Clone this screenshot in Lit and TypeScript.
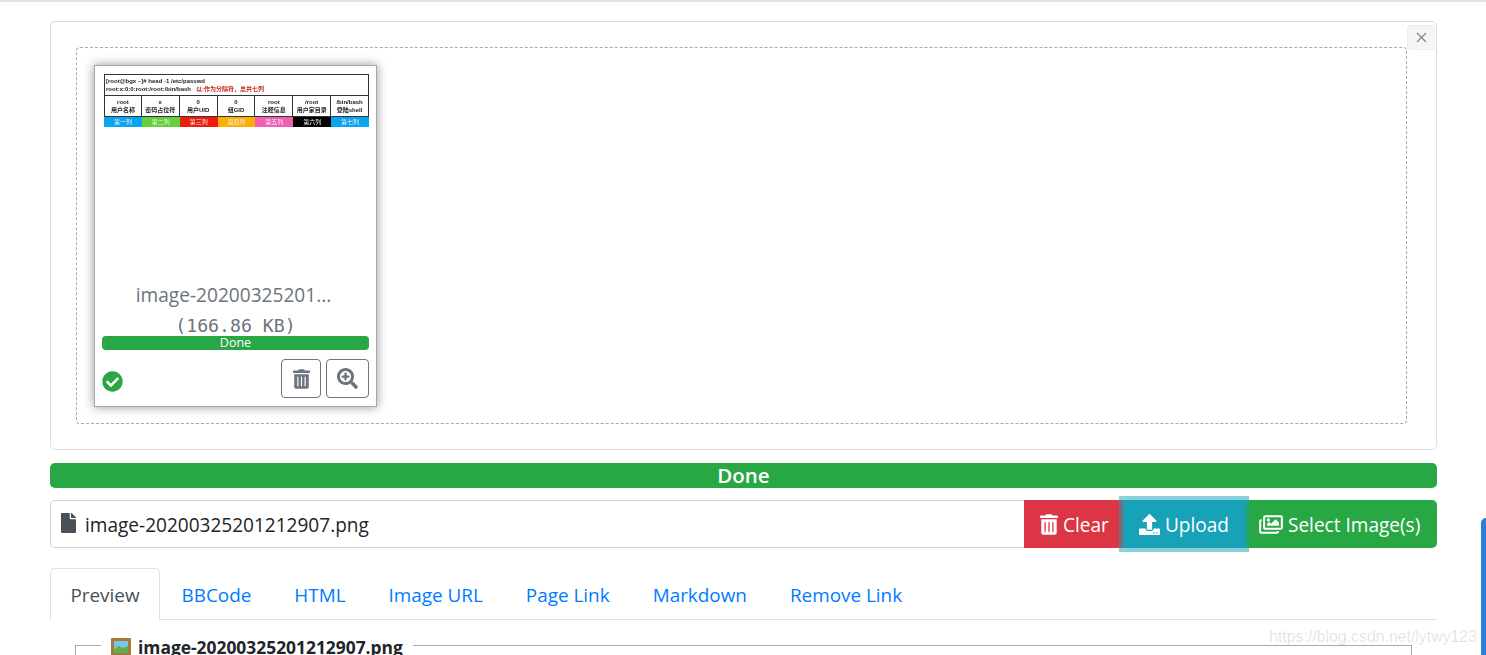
import { LitElement, html, css, svg } from "lit";
import { customElement } from "lit/decorators.js";

const icon = (vb: string, d: string, cls: string) =>
  html`<svg class=${cls} viewBox=${vb} fill="currentColor" aria-hidden="true">${svg`<path d=${d}></path>`}</svg>`;

const TRASH = "M32 464a48 48 0 0 0 48 48h288a48 48 0 0 0 48-48V128H32zm272-256a16 16 0 0 1 32 0v224a16 16 0 0 1-32 0zm-96 0a16 16 0 0 1 32 0v224a16 16 0 0 1-32 0zm-96 0a16 16 0 0 1 32 0v224a16 16 0 0 1-32 0zM432 32H312l-9.4-18.7A24 24 0 0 0 281.1 0H166.8a23.72 23.72 0 0 0-21.4 13.3L136 32H16A16 16 0 0 0 0 48v32a16 16 0 0 0 16 16h416a16 16 0 0 0 16-16V48a16 16 0 0 0-16-16z";
const ZOOM = "M304 192v32c0 6.6-5.4 12-12 12h-56v56c0 6.6-5.4 12-12 12h-32c-6.6 0-12-5.4-12-12v-56h-56c-6.6 0-12-5.4-12-12v-32c0-6.6 5.4-12 12-12h56v-56c0-6.6 5.4-12 12-12h32c6.6 0 12 5.4 12 12v56h56c6.6 0 12 5.4 12 12zm201 284.7L476.7 505c-9.4 9.4-24.6 9.4-33.9 0L343 405.3c-4.5-4.5-7-10.6-7-17V372c-35.3 27.6-79.7 44-128 44C93.1 416 0 322.9 0 208S93.1 0 208 0s208 93.1 208 208c0 48.3-16.4 92.7-44 128h16.3c6.4 0 12.5 2.5 17 7l99.7 99.7c9.3 9.4 9.3 24.6 0 34zM344 208c0-75.2-60.8-136-136-136S72 132.8 72 208s60.8 136 136 136 136-60.8 136-136z";
const CHECK = "M504 256c0 136.967-111.033 248-248 248S8 392.967 8 256 119.033 8 256 8s248 111.033 248 248zM227.314 387.314l184-184c6.248-6.248 6.248-16.379 0-22.627l-22.627-22.627c-6.248-6.249-16.379-6.249-22.628 0L216 308.118l-70.059-70.059c-6.248-6.248-16.379-6.248-22.628 0l-22.627 22.627c-6.248 6.248-6.248 16.379 0 22.627l104 104c6.249 6.25 16.379 6.25 22.628.001z";
const UPLOAD = "M296 384h-80c-13.3 0-24-10.7-24-24V192h-87.7c-17.8 0-26.7-21.5-14.1-34.1L242.3 5.7c7.5-7.5 19.8-7.5 27.3 0l152.2 152.2c12.6 12.6 3.7 34.1-14.1 34.1H320v168c0 13.3-10.7 24-24 24zm216-8v112c0 13.3-10.7 24-24 24H24c-13.3 0-24-10.7-24-24V376c0-13.3 10.7-24 24-24h136v8c0 30.9 25.1 56 56 56h80c30.9 0 56-25.1 56-56v-8h136c13.3 0 24 10.7 24 24zm-124 88c0-11-9-20-20-20s-20 9-20 20 9 20 20 20 20-9 20-20zm64 0c0-11-9-20-20-20s-20 9-20 20 9 20 20 20 20-9 20-20z";
const IMAGES = "M480 416v16c0 26.51-21.49 48-48 48H48c-26.51 0-48-21.49-48-48V176c0-26.51 21.49-48 48-48h16v48H54a6 6 0 0 0-6 6v244a6 6 0 0 0 6 6h372a6 6 0 0 0 6-6v-10h48zm42-336H150a6 6 0 0 0-6 6v244a6 6 0 0 0 6 6h372a6 6 0 0 0 6-6V86a6 6 0 0 0-6-6zm6-48c26.51 0 48 21.49 48 48v256c0 26.51-21.49 48-48 48H144c-26.51 0-48-21.49-48-48V80c0-26.51 21.49-48 48-48h384zM264 144c0 22.091-17.909 40-40 40s-40-17.909-40-40 17.909-40 40-40 40 17.909 40 40zm-72 96l39.515-39.515c4.686-4.686 12.284-4.686 16.971 0L288 240l103.515-103.515c4.686-4.686 12.284-4.686 16.971 0L480 208v80H192v-48z";
const FILE = "M224 136V0H24C10.7 0 0 10.7 0 24v464c0 13.3 10.7 24 24 24h336c13.3 0 24-10.7 24-24V160H248c-13.2 0-24-10.8-24-24zm160-14.1v6.1H256V0h6.1c6.4 0 12.5 2.5 17 7l97.9 98c4.5 4.5 7 10.6 7 16.9z";

const COLS = [
  ["root", "用户名称", "第一列", "#0aa5f0"],
  ["x", "密码占位符", "第二列", "#63d03c"],
  ["0", "用户UID", "第三列", "#ee1c0c"],
  ["0", "组GID", "第四列", "#fcb005"],
  ["root", "注释信息", "第五列", "#f060b0"],
  ["/root", "用户家目录", "第六列", "#000000"],
  ["/bin/bash", "登陆shell", "第七列", "#0aa5f0"],
];

@customElement("app-root")
export class AppRoot extends LitElement {
  static styles = css`
    :host {
      display: block;
      height: 655px;
      overflow: hidden;
      position: relative;
      background: #fff;
      font-family: "Open Sans", "Noto Sans", sans-serif;
      color: #212529;
    }
    .topline { height: 2px; background: #e3e3e3; }
    .page { padding: 19px 49px 0 50px; display: flex; flex-direction: column; }

    .box {
      position: relative;
      height: 429px;
      box-sizing: border-box;
      border: 1px solid #ddd;
      border-radius: 5px;
      padding: 25px 29px 25px 25px;
      display: flex;
    }
    .close {
      position: absolute;
      top: 3px;
      right: 1px;
      width: 28px;
      height: 25px;
      box-sizing: border-box;
      border: 1px solid #eee;
      border-radius: 3px;
      background: #f5f5f5;
      display: flex;
      align-items: center;
      justify-content: center;
    }
    .close svg { width: 11px; height: 11px; stroke: #8a8a8a; stroke-width: 1.4; fill: none; }
    .drop {
      flex: 1;
      border: 1px dashed #aaa;
      border-radius: 4px;
      padding: 17px;
      display: flex;
      align-items: flex-start;
    }
    .thumb {
      width: 283px;
      height: 342px;
      box-sizing: border-box;
      border: 1px solid #a8a8a8;
      box-shadow: 0 0 10px 0 rgba(0, 0, 0, .42);
      background: #fff;
      padding: 8px 7px 8px 7px;
      display: flex;
      flex-direction: column;
    }
    .shot {
      margin: 0 0 0 2px;
      width: 265px;
      height: 208px;
      flex: none;
      font-family: "Liberation Sans", "Noto Sans CJK SC", sans-serif;
      font-size: 6px;
      line-height: 8px;
      color: #222;
      font-weight: 700;
      filter: blur(.5px);
    }
    .head {
      height: 22px;
      box-sizing: border-box;
      border: 1px solid #333;
      padding: 2px 1px 0 1px;
      white-space: nowrap;
      overflow: hidden;
    }
    .red { color: #c8281e; margin-left: 5px; }
    .cols { display: grid; grid-template-columns: repeat(7, 1fr); }
    .col { display: flex; flex-direction: column; min-width: 0; }
    .cell {
      height: 21px;
      box-sizing: border-box;
      border-right: 1px solid #333;
      border-bottom: 1px solid #333;
      text-align: center;
      padding-top: 2px;
      white-space: nowrap;
      overflow: hidden;
    }
    .col:first-child .cell { border-left: 1px solid #333; }
    .tag { height: 10px; line-height: 10px; text-align: center; color: #eee; overflow: hidden; font-weight: 400; }
    .name {
      font-size: 19.1px;
      line-height: 26px;
      color: #6c757d;
      text-align: center;
      white-space: nowrap;
      padding-right: 4px;
    }
    .size {
      margin-top: 7px;
      font-family: "DejaVu Sans Mono", monospace;
      font-size: 18.2px;
      line-height: 22px;
      color: #6c757d;
      text-align: center;
      height: 21px;
    }
    .bar {
      background: #28a745;
      color: #fff;
      text-align: center;
      border-radius: 4px;
      white-space: nowrap;
    }
    .bar.small { height: 14px; line-height: 14px; font-size: 12.5px; font-weight: 500; flex: none; }
    .foot { margin-top: 9px; display: flex; align-items: flex-end; gap: 5px; flex: none; }
    .check { width: 21px; height: 21px; color: #28a745; margin-right: auto; margin-bottom: 6px; }
    .ibtn {
      height: 39px;
      box-sizing: border-box;
      border: 1px solid #6c757d;
      border-radius: 4px;
      color: #6c757d;
      display: flex;
      align-items: center;
      justify-content: center;
    }
    .ibtn.del { width: 40px; }
    .ibtn.zoom { width: 43px; }
    .ibtn.del svg { width: 17px; height: 20px; }
    .ibtn.zoom svg { width: 21px; height: 21px; }

    .bar.big { margin-top: 13px; height: 25px; line-height: 25px; font-size: 20.5px; border-radius: 5px; font-weight: 600; }

    .inputrow { margin-top: 12px; height: 48px; display: flex; font-size: 19.05px; }
    .caption {
      flex: 1;
      min-width: 0;
      box-sizing: border-box;
      border: 1px solid #ced4da;
      border-right: 0;
      border-radius: 5px 0 0 5px;
      display: flex;
      align-items: center;
      padding: 1px 0 0 10px;
      color: #212529;
      white-space: nowrap;
    }
    .caption svg { width: 15px; height: 20px; color: #495057; margin-right: 9px; margin-top: -3px; }
    .btn {
      box-sizing: border-box;
      color: #fff;
      display: flex;
      align-items: center;
      white-space: nowrap;
      padding-top: 1px;
    }
    .btn svg { display: block; flex: none; margin-top: -1px; }
    .clear { width: 99px; background: #dc3545; padding-left: 16px; }
    .clear svg { width: 18px; height: 21px; margin-right: 5px; }
    .upload {
      width: 122px;
      background: #17a2b8;
      padding-left: 16px;
      box-shadow: 0 0 0 4px rgba(23, 162, 184, .5);
      position: relative;
    }
    .upload svg { width: 21px; height: 21px; margin-right: 5px; }
    .select { width: 192px; background: #28a745; padding-left: 14px; border-radius: 0 5px 5px 0; }
    .select svg { width: 24px; height: 21px; margin-right: 5px; }

    .tabs { margin-top: 20px; height: 52px; box-sizing: border-box; border-bottom: 1px solid #dee2e6; display: flex; font-size: 18.9px; }
    .tab { padding: 1px 21.5px 0; height: 51px; line-height: 52px; color: #007bff; white-space: nowrap; box-sizing: border-box; }
    .tab.on {
      width: 110px;
      height: 52px;
      text-align: center;
      color: #495057;
      border: 1px solid #dee2e6;
      border-bottom: 0;
      border-radius: 5px 5px 0 0;
      background: #fff;
      padding: 0;
    }

    .field {
      margin: 25px 25px 0 25px;
      border: 0;
      border-top: 1px solid #aaa;
      border-left: 1px solid #aaa;
      border-right: 1px solid #aaa;
      height: 30px;
      position: relative;
    }
    .legend {
      position: absolute;
      left: 25px;
      top: -9px;
      background: #fff;
      padding: 0 10px;
      display: flex;
      align-items: center;
      gap: 7px;
      font-size: 17.4px;
      line-height: 20px;
      font-weight: 700;
      white-space: nowrap;
    }
    .legend svg { width: 20px; height: 18px; flex: none; }

    .edge {
      position: absolute;
      right: 0;
      top: 518px;
      width: 5px;
      height: 137px;
      background: #2b7fdc;
      border-radius: 5px 0 0 0;
    }
    .mark {
      position: absolute;
      right: 9px;
      top: 627px;
      font-family: "Liberation Sans", sans-serif;
      font-size: 15.85px;
      line-height: 20px;
      color: rgba(0, 0, 0, .12);
      white-space: nowrap;
    }
  `;

  render() {
    return html`
      <div class="topline"></div>
      <div class="page">
        <div class="box">
          <div class="close">
            <svg viewBox="0 0 11 11"><path d="M1 1l9 9M10 1l-9 9"></path></svg>
          </div>
          <div class="drop">
            <div class="thumb">
              <div class="shot">
                <div class="head">
                  [root@bgx ~]# head -1 /etc/passwd<br />root:x:0:0:root:/root:/bin/bash<span class="red">以:作为分隔符，总共七列</span>
                </div>
                <div class="cols">
                  ${COLS.map(
                    (c) => html`<div class="col">
                      <div class="cell">${c[0]}<br />${c[1]}</div>
                      <div class="tag" style="background:${c[3]}">${c[2]}</div>
                    </div>`
                  )}
                </div>
              </div>
              <div class="name">image-20200325201...</div>
              <div class="size">(166.86 KB)</div>
              <div class="bar small">Done</div>
              <div class="foot">
                ${icon("0 0 512 512", CHECK, "check")}
                <div class="ibtn del">${icon("0 0 448 512", TRASH, "")}</div>
                <div class="ibtn zoom">${icon("0 0 512 512", ZOOM, "")}</div>
              </div>
            </div>
          </div>
        </div>

        <div class="bar big">Done</div>

        <div class="inputrow">
          <div class="caption">${icon("0 0 384 512", FILE, "")}image-20200325201212907.png</div>
          <div class="btn clear">${icon("0 0 448 512", TRASH, "")}Clear</div>
          <div class="btn upload">${icon("0 0 512 512", UPLOAD, "")}Upload</div>
          <div class="btn select">${icon("0 0 576 512", IMAGES, "")}Select Image(s)</div>
        </div>

        <div class="tabs">
          <div class="tab on">Preview</div>
          <div class="tab">BBCode</div>
          <div class="tab">HTML</div>
          <div class="tab">Image URL</div>
          <div class="tab">Page Link</div>
          <div class="tab">Markdown</div>
          <div class="tab">Remove Link</div>
        </div>

        <div class="field">
          <div class="legend">
            <svg viewBox="0 0 20 18">
              <rect width="20" height="18" rx="1" fill="#a9793a"></rect>
              <rect x="3" y="3" width="14" height="12" fill="#7cc3e8"></rect>
              <path d="M3 11l5-3 4 2 5-2v7H3z" fill="#5fb04a"></path>
            </svg>
            image-20200325201212907.png
          </div>
        </div>
      </div>
      <div class="edge"></div>
      <div class="mark">https://blog.csdn.net/lytwy123</div>
    `;
  }
}
